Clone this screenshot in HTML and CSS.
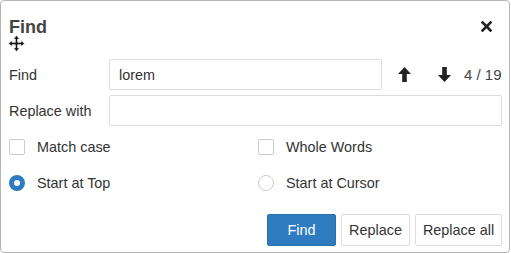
FILE: index.html
```html
<!DOCTYPE html>
<html lang="en">
<head>
    <meta charset="UTF-8">
    <title>Find</title>
    <link rel="stylesheet" href="styles.css">
</head>
<body>
<div class="dialog">
    <div class="head">
        <h1 class="title">Find</h1>
        <span class="close">
            <svg width="11" height="11" viewBox="0 0 11 11"><path d="M1.5 1.5L9.5 9.5M9.5 1.5L1.5 9.5" stroke="#222" stroke-width="2.6" stroke-linecap="square"/></svg>
        </span>
    </div>
    <div class="move">
        <svg width="17" height="17" viewBox="-0.5 -0.5 17 17">
            <path d="M8 0L11 3.5H9.2V6.8H12.5V5L16 8L12.5 11V9.2H9.2V12.5H11L8 16L5 12.5H6.8V9.2H3.5V11L0 8L3.5 5V6.8H6.8V3.5H5Z" fill="#111" stroke="#ddd" stroke-width="0.9"/>
        </svg>
    </div>

    <div class="row first">
        <label class="lbl">Find</label>
        <input class="field field-find" type="text" value="lorem">
        <span class="arrow up">
            <svg width="13" height="15" viewBox="0 0 13 15"><path d="M6.5 0L13 7H8.8V15H4.2V7H0Z" fill="#222"/></svg>
        </span>
        <span class="arrow">
            <svg width="13" height="15" viewBox="0 0 13 15"><path d="M6.5 15L13 8H8.8V0H4.2V8H0Z" fill="#222"/></svg>
        </span>
        <span class="count">4 / 19</span>
    </div>
    <div class="row">
        <label class="lbl">Replace with</label>
        <input class="field" type="text">
    </div>

    <div class="opts">
        <label class="opt"><span class="box"></span>Match case</label>
        <label class="opt"><span class="box"></span>Whole Words</label>
        <label class="opt"><span class="radio on"></span>Start at Top</label>
        <label class="opt"><span class="radio"></span>Start at Cursor</label>
    </div>

    <div class="actions">
        <button type="button" class="btn primary">Find</button>
        <button type="button" class="btn">Replace</button>
        <button type="button" class="btn wide">Replace all</button>
    </div>
</div>
</body>
</html>
```
FILE: styles.css
```css
* {
    box-sizing: border-box;
}

html, body {
    margin: 0;
    padding: 0;
    background: #fff;
}

body {
    font-family: "Liberation Sans", Arial, sans-serif;
    font-size: 14.4px;
    color: #333;
}

.dialog {
    width: 510px;
    height: 253px;
    border: 1px solid #b5b5b5;
    border-radius: 4px;
    padding: 0 7px 0 8px;
}

.head {
    display: flex;
    justify-content: space-between;
    align-items: flex-start;
    height: 36px;
    padding-top: 16px;
}

.title {
    margin: 0;
    font-size: 18px;
    line-height: 20px;
    font-weight: bold;
    color: #444;
}

.close {
    display: flex;
    margin-right: 10px;
    margin-top: 4px;
}

.move {
    height: 19px;
    margin-top: -2px;
    margin-left: -1px;
}

.row {
    display: flex;
    align-items: center;
    height: 31px;
    margin-top: 5px;
}

.lbl {
    width: 100px;
    flex: none;
}

.field {
    height: 31px;
    border: 1px solid #ddd;
    border-radius: 2px;
    padding: 0 9px;
    font-family: inherit;
    font-size: 14.4px;
    color: #333;
    width: 393px;
    flex: none;
    outline: none;
}

.field-find {
    width: 273px;
}

.arrow {
    display: flex;
    flex: none;
    margin-left: 27px;
}

.arrow.up {
    margin-left: 16px;
}

.count {
    flex: none;
    white-space: nowrap;
    margin-left: 13px;
    font-size: 15px;
    color: #444;
}

.opts {
    display: grid;
    grid-template-columns: 249px 1fr;
    row-gap: 20px;
    margin-top: 13px;
}

.opt {
    display: flex;
    align-items: center;
    height: 16px;
}

.box {
    width: 16px;
    height: 16px;
    border: 1px solid #ccc;
    border-radius: 2px;
    margin-right: 12px;
}

.radio {
    width: 16px;
    height: 16px;
    border: 1px solid #ccc;
    border-radius: 50%;
    margin-right: 12px;
}

.radio.on {
    border: 5px solid #2f7bbf;
    background: #fff;
}

.actions {
    display: flex;
    justify-content: flex-end;
    gap: 5px;
    margin-top: 23px;
}

.btn {
    width: 69px;
    height: 32px;
    padding: 0;
    border: 1px solid #ddd;
    border-radius: 2px;
    background: #fff;
    color: #333;
    font-family: inherit;
    font-size: 14.4px;
}

.btn.wide {
    width: 87px;
}

.btn.primary {
    background: #2f7bbf;
    border-color: #2a70ad;
    color: #fff;
}
```
